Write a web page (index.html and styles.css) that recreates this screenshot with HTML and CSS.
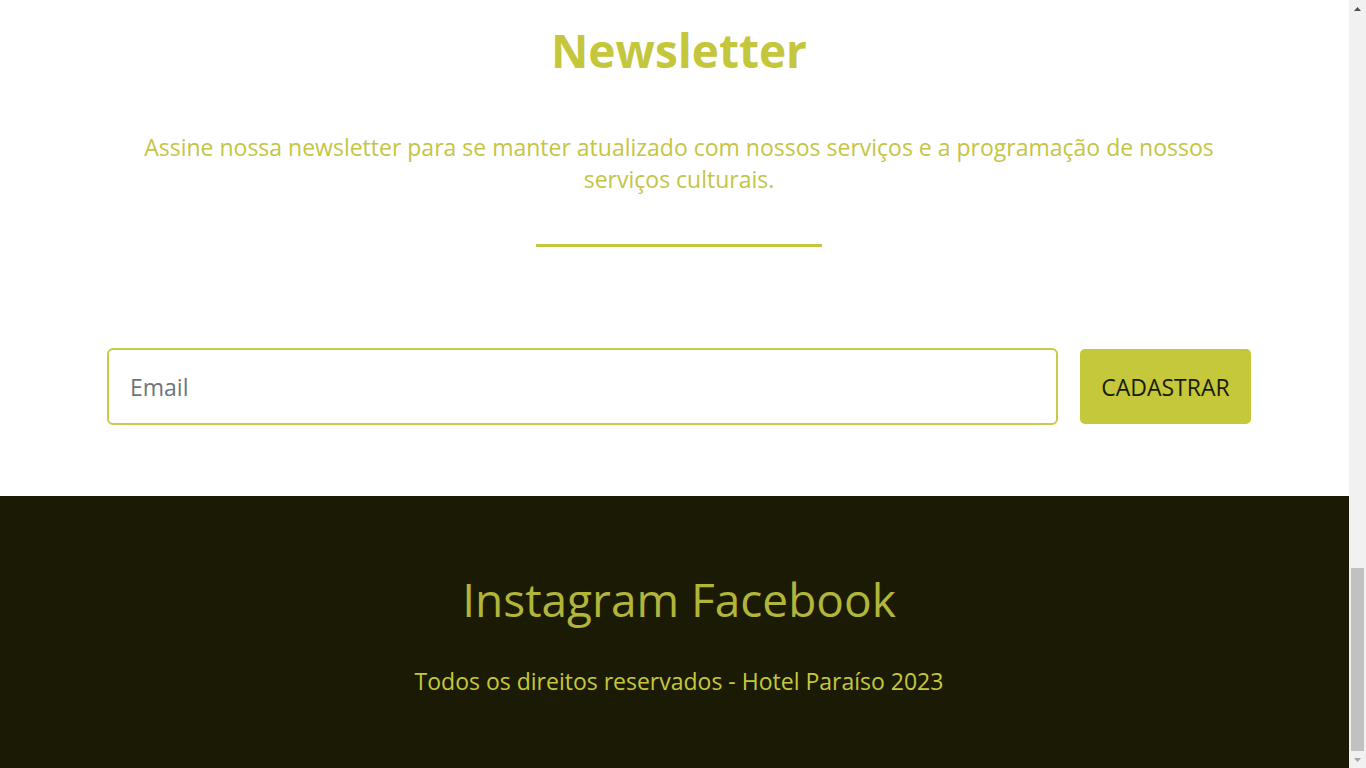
FILE: index.html
```html
<!DOCTYPE html>
<html lang="pt-BR">
<head>
<meta charset="utf-8">
<title>Hotel Paraíso - Newsletter</title>
<link rel="stylesheet" href="styles.css">
</head>
<body>
<div class="page">
  <main class="content">
    <section class="newsletter">
      <div class="newsletter-inner">
        <h2 class="newsletter-title">Newsletter</h2>
        <p class="newsletter-text">Assine nossa newsletter para se manter atualizado com nossos serviços e a programação de nossos serviços culturais.</p>
        <hr class="divider">
        <form class="newsletter-form">
          <input class="email-input" type="email" placeholder="Email">
          <button class="submit-btn" type="button">CADASTRAR</button>
        </form>
      </div>
    </section>
    <footer class="site-footer">
      <div class="social">Instagram Facebook</div>
      <p class="copyright">Todos os direitos reservados - Hotel Paraíso 2023</p>
    </footer>
  </main>
  <aside class="scrollbar" aria-hidden="true">
    <div class="sb-btn">
      <svg width="7" height="4" viewBox="0 0 7 4"><path d="M0 4 L3.5 0 L7 4 Z" fill="#505050"/></svg>
    </div>
    <div class="sb-track"><div class="sb-thumb"></div></div>
    <div class="sb-btn">
      <svg width="7" height="4" viewBox="0 0 7 4"><path d="M0 0 L7 0 L3.5 4 Z" fill="#a3a3a3"/></svg>
    </div>
  </aside>
</div>
</body>
</html>
```

FILE: styles.css
```css
* { box-sizing: border-box; }
html, body { margin: 0; padding: 0; }
body {
  font-family: "Open Sans", "Noto Sans", sans-serif;
  background: #ffffff;
}
.page {
  display: flex;
  min-height: 768px;
}
.content {
  flex: 1;
  min-width: 0;
}
.newsletter {
  padding: 17px 0 71px 9px;
  background: #ffffff;
}
.newsletter-inner {
  max-width: 1144px;
  margin: 0 auto;
  display: flex;
  flex-direction: column;
  align-items: center;
}
.newsletter-title {
  margin: 0;
  font-size: 46px;
  font-weight: 700;
  line-height: 66px;
  color: #c4c63b;
}
.newsletter-text {
  margin: 48px 0 0;
  font-size: 23px;
  line-height: 32px;
  text-align: center;
  color: #c4c545;
}
.divider {
  width: 286px;
  height: 3px;
  margin: 49px 0 0;
  border: 0;
  background: #c4c63b;
}
.newsletter-form {
  margin-top: 101px;
  width: 100%;
  display: flex;
  gap: 22px;
  align-items: center;
}
.email-input {
  flex: 1;
  height: 77px;
  padding: 0 21px;
  border: 2px solid #c9ca48;
  border-radius: 6px;
  font-family: inherit;
  font-size: 23px;
  color: #495057;
  outline: none;
}
.email-input::placeholder { color: #6c757d; }
.submit-btn {
  width: 171px;
  height: 75px;
  border: 0;
  border-radius: 5px;
  background: #c5c83a;
  color: #1b1b05;
  font-family: inherit;
  font-size: 23px;
  padding: 0;
}
.site-footer {
  background: #1b1b05;
  padding: 71px 0 70px 9px;
  text-align: center;
}
.social {
  font-size: 46px;
  line-height: 65px;
  color: #b1b53a;
}
.copyright {
  margin: 33px 0 0;
  font-size: 23px;
  line-height: 33px;
  color: #c5c83a;
}
.scrollbar {
  width: 17px;
  flex: 0 0 17px;
  background: #f1f1f1;
  display: flex;
  flex-direction: column;
}
.sb-btn {
  height: 17px;
  display: flex;
  align-items: center;
  justify-content: center;
}
.sb-track {
  flex: 1;
  display: flex;
  flex-direction: column;
  justify-content: flex-end;
  padding: 0 2px;
}
.sb-thumb {
  height: 183px;
  background: #c1c1c1;
}
```
